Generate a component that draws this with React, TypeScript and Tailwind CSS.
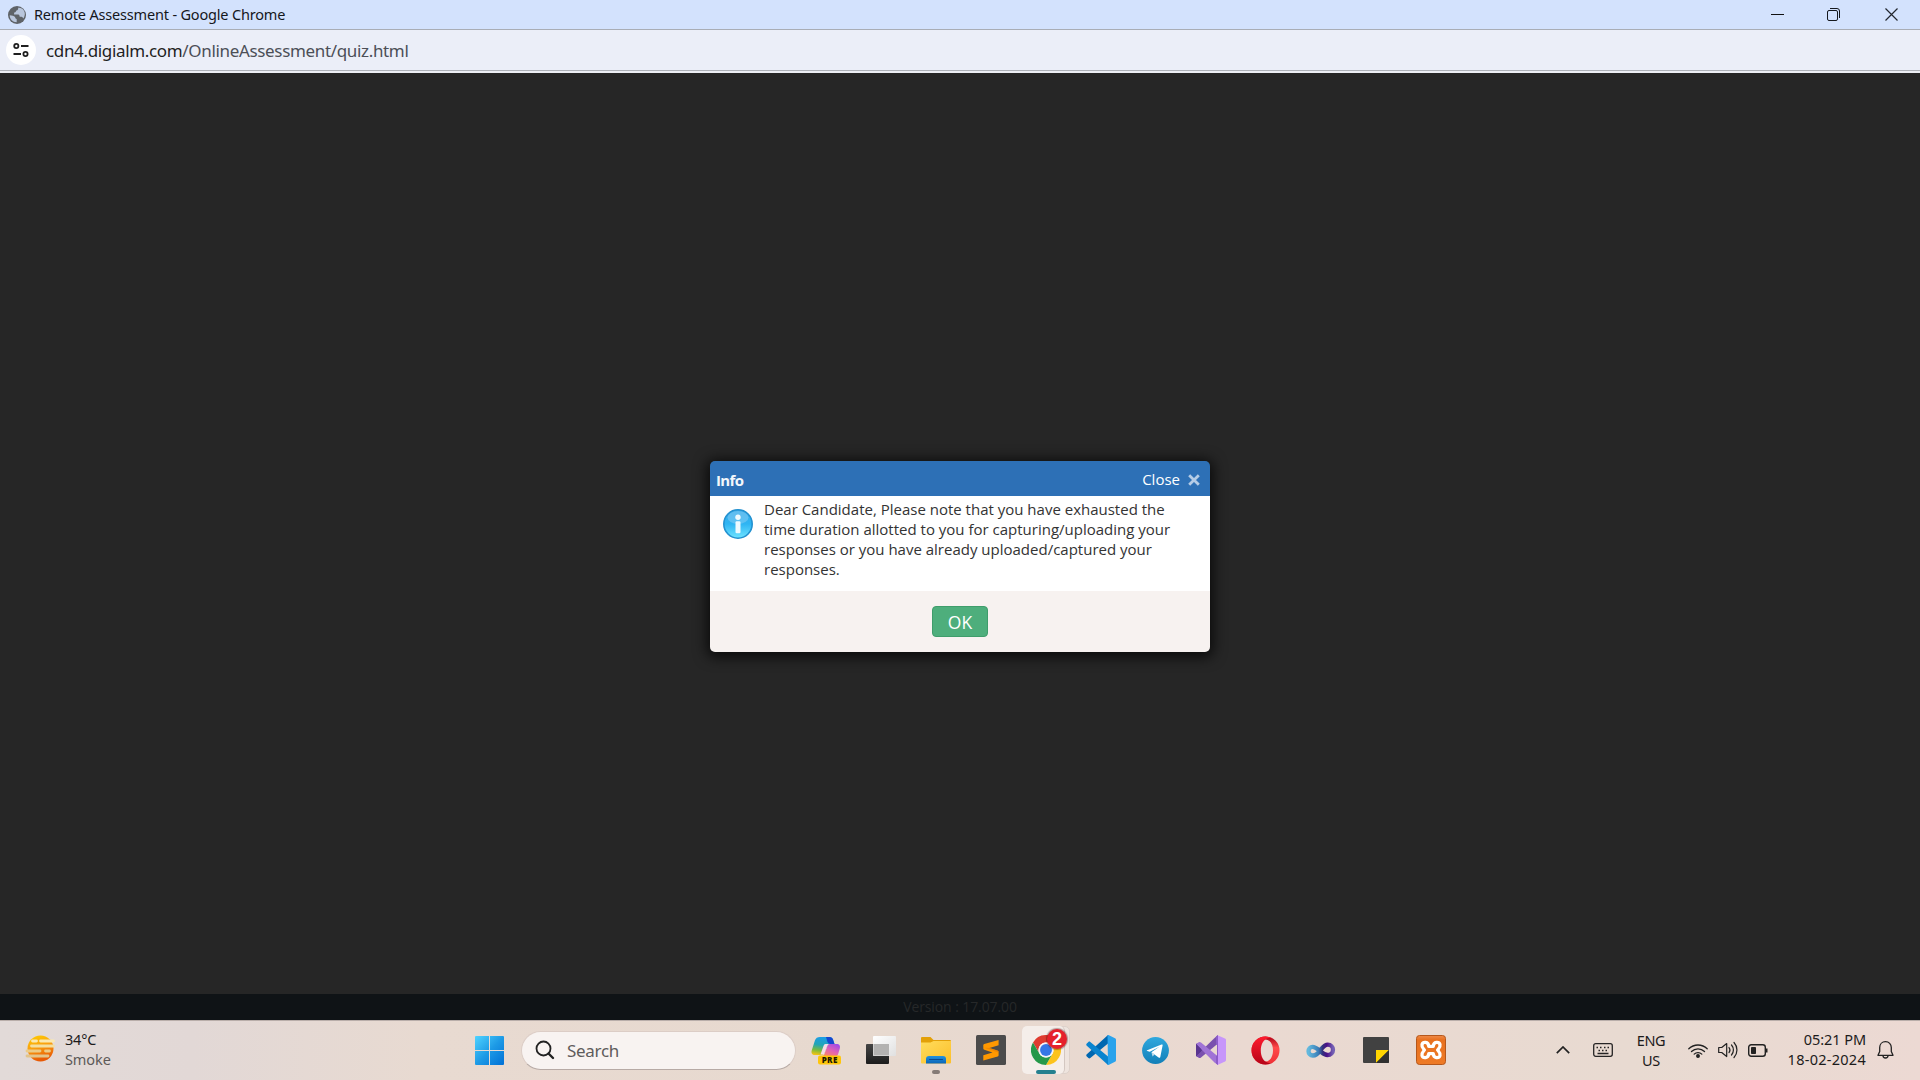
import React from "react";

function Globe() {
  return (
    <svg width="18" height="18" viewBox="0 0 18 18">
      <circle cx="9" cy="9" r="9" fill="#5f6368" />
      <path d="M9.500 1.600c.4 1.600-.3 2.500-1.700 2.600-.6 1.200-.8 2.200-2.300 2.200v2h4.200c1 .3 1.300 1.200 1.400 2.200h1.700c1.200.2 1.600 1 1.900 1.800 2.500-3.300 2-8-1.600-10-1-.7-2.400-1-3.600-.8z" fill="#b9c6dc" transform="translate(.6 .2)" />
      <path d="M1.700 9.300c2.300.2 4.200.7 5.300 1.700.5 1.100.3 1.700 1.700 1.900v3.400C4.700 16.300 1.700 13.200 1.700 9.300z" fill="#b9c6dc" />
    </svg>
  );
}

function Smoke() {
  return (
    <svg className="-mt-[3px]" width="31" height="27" viewBox="0 0 31 27">
      <defs>
        <linearGradient id="sun" x1="0" y1="0" x2=".3" y2="1">
          <stop offset="0" stopColor="#ffd000" />
          <stop offset=".5" stopColor="#f9a010" />
          <stop offset="1" stopColor="#e85a06" />
        </linearGradient>
      </defs>
      <circle cx="15.500" cy="13.500" r="13" fill="url(#sun)" />
      <g strokeLinecap="round" strokeWidth="2.800">
        <path d="M7.500 6h4M15.500 6h13" stroke="#fbe9b0" />
        <path d="M6.500 11h22" stroke="#f3dfa0" />
        <path d="M2 16h13M20.500 16h4" stroke="#eccb86" />
        <path d="M2 21h21" stroke="#e3c48a" />
      </g>
    </svg>
  );
}

function WindowsLogo() {
  return (
    <svg width="29" height="29" viewBox="0 0 29 29">
      <defs>
        <linearGradient id="win" x1="0" y1="0" x2="29" y2="29" gradientUnits="userSpaceOnUse">
          <stop offset="0" stopColor="#4fd3ff" />
          <stop offset=".5" stopColor="#1e9be6" />
          <stop offset="1" stopColor="#0070d6" />
        </linearGradient>
      </defs>
      <path d="M1 0h13v14H0V1a1 1 0 0 1 1-1zM15 0h13a1 1 0 0 1 1 1v13H15zM0 15h14v14H1a1 1 0 0 1-1-1zM15 15h14v13a1 1 0 0 1-1 1H15z" fill="url(#win)" />
    </svg>
  );
}

function Copilot() {
  return (
    <svg width="30" height="30" viewBox="0 0 30 30">
      <defs>
        <linearGradient id="cpa" x1=".5" y1="0" x2=".3" y2="1">
          <stop offset="0" stopColor="#1b9de8" />
          <stop offset=".45" stopColor="#23a5b5" />
          <stop offset=".75" stopColor="#7bbb3c" />
          <stop offset="1" stopColor="#f2c215" />
        </linearGradient>
        <linearGradient id="cpb" x1=".8" y1="0" x2=".2" y2="1">
          <stop offset="0" stopColor="#a04ae8" />
          <stop offset=".5" stopColor="#e262b4" />
          <stop offset="1" stopColor="#ff8a5c" />
        </linearGradient>
      </defs>
      <path d="M9 2h9.500c2 0 3 1 3.500 2.500L23.500 9h-4c-2 0-3 1-3.600 2.600L13.500 18c-.5 1.400-1.500 2-3 2H4c-3 0-4-2-3.300-4.500l3.200-10C4.700 3 6.500 2 9 2z" fill="url(#cpa)" />
      <path d="M15 2h3.500c2 0 3 1 3.500 2.500L23.500 9h-4c-1.500 0-2.500-.7-3-2z" fill="#1547cf" />
      <path d="M19 9h6.500c3 0 4 2 3.300 4.500L27 19.500c-.6 1.500-2 2.500-4 2.500H11l2-2 3-8c.6-2 1.500-3 3-3z" fill="url(#cpb)" />
      <path d="M14.500 9h3.500c-1.200.6-1.700 1.500-2.200 3L13 19.500h-3.500L12.500 11c.4-1.200 1-2 2-2z" fill="#f6dce8" />
      <rect x="7" y="20.500" width="23" height="9" rx="2" fill="#ffc60a" />
      <text x="18.700" y="28" textAnchor="middle" fontFamily="Open Sans, sans-serif" fontWeight="800" fontSize="8" letterSpacing=".4" fill="#1d1900">PRE</text>
    </svg>
  );
}

function TaskView() {
  return (
    <svg width="30" height="30" viewBox="0 0 30 30">
      <defs>
        <linearGradient id="tvd" x1="0" y1="0" x2="0" y2="1"><stop offset="0" stopColor="#454545" /><stop offset="1" stopColor="#1c1c1c" /></linearGradient>
        <linearGradient id="tvl" x1="0" y1="0" x2="1" y2="1"><stop offset="0" stopColor="#fff" /><stop offset="1" stopColor="#e0e0e0" /></linearGradient>
      </defs>
      <rect x="0" y="9" width="23" height="20" rx="1" fill="url(#tvd)" />
      <rect x="7" y="1" width="23" height="20" rx="1" fill="url(#tvl)" />
      <rect x="7" y="9" width="16" height="12" fill="#b3b2b1" />
      <path d="M7.500 9v11.500H23" fill="none" stroke="#d2d1d0" />
    </svg>
  );
}

function Folder() {
  return (
    <svg width="30" height="30" viewBox="0 0 30 30">
      <defs>
        <linearGradient id="fo" x1="0" y1="0" x2="1" y2="1"><stop offset="0" stopColor="#ffdc5c" /><stop offset="1" stopColor="#fcbf2a" /></linearGradient>
        <linearGradient id="fb" x1="0" y1="0" x2="0" y2="1"><stop offset="0" stopColor="#2391dd" /><stop offset="1" stopColor="#0b66b8" /></linearGradient>
      </defs>
      <path d="M1 2h8.500l3 3H29a1 1 0 0 1 1 1v4H0V3a1 1 0 0 1 1-1z" fill="#e3a008" />
      <path d="M0 7.500h9.500L12.500 6H30v21.500a1 1 0 0 1-1 1H1a1 1 0 0 1-1-1z" fill="url(#fo)" />
      <path d="M5 28.500V24c0-2 1-3 3-3h14c2 0 3 1 3 3v4.500z" fill="url(#fb)" />
      <path d="M8.500 24.500h13" stroke="#0b4a90" strokeWidth="1" strokeLinecap="round" />
    </svg>
  );
}

function Sublime() {
  return (
    <svg width="30" height="30" viewBox="0 0 30 30">
      <rect width="30" height="30" rx="1.500" fill="#4b4b4b" />
      <path d="M22.600 5v5.200L13.500 13l8 2.500c.7.200 1.100.5 1.100 1.200v3.500c0 .6-.3 1-.9 1.200L7.300 25.500v-5.300l9.200-2.800-8.200-2.600c-.7-.2-1-.6-1-1.200v-3.500c0-.6.300-1 .9-1.200z" fill="#ff9800" />
      <path d="M13.500 13l8 2.500c.7.200 1.100.5 1.100 1.200l-1 .6-13.300-4.500z" fill="#e27600" opacity=".5" />
    </svg>
  );
}

function ChromeLogo() {
  return (
    <svg width="30" height="30" viewBox="0 0 48 48">
      <circle cx="24" cy="24" r="23.500" fill="#fff" />
      <path d="M3.200 12A24 24 0 0 1 44.800 12H24A12 12 0 0 0 13.600 30z" fill="#df3b30" />
      <path d="M44.800 12A24 24 0 0 1 24 48L34.400 30A12 12 0 0 0 24 12z" fill="#fcc31e" />
      <path d="M24 48A24 24 0 0 1 3.200 12L13.600 30a12 12 0 0 0 20.800 0z" fill="#25984a" />
      <circle cx="24" cy="24" r="12" fill="#f4f3f6" />
      <circle cx="24" cy="24" r="9.500" fill="#3476e6" />
    </svg>
  );
}

function Code() {
  return (
    <svg width="30" height="30" viewBox="0 0 30 30">
      <path d="M22 0L.8 19.300c-.7.600-.7 1.600 0 2.200l1.600 1.500c.6.500 1.300.5 1.900.1L22 8.500z" fill="#0067b0" />
      <path d="M22 30L.8 10.700c-.7-.6-.7-1.600 0-2.200L2.400 7c.6-.5 1.300-.5 1.900-.1L22 21.500z" fill="#0a84cf" />
      <path d="M21.500.300c.5-.4 1-.3 1.500-.1l6 3c.6.300 1 .8 1 1.500v20.600c0 .7-.4 1.200-1 1.500l-6 3c-.6.300-1 .3-1.500-.1L22 29z" fill="#2aa3ec" />
    </svg>
  );
}

function Telegram() {
  return (
    <svg width="27" height="27" viewBox="0 0 27 27">
      <defs><linearGradient id="tg" x1="0" y1="0" x2="0" y2="1"><stop offset="0" stopColor="#2fa8de" /><stop offset="1" stopColor="#127fb8" /></linearGradient></defs>
      <circle cx="13.500" cy="13.500" r="13.400" fill="url(#tg)" />
      <path d="M5.200 13.300L19.500 7.500c.9-.3 1.300.1 1.100 1.100l-2.300 11.300c-.2 1-.9 1.200-1.700.7l-7.200-5.300 8-5.500-9.600 4.900-2.600-.7c-.7-.2-.7-.5 0-.7z" fill="#fff" />
      <path d="M9.400 15.300l1.200 4.200 1.900-1.900z" fill="#c5dcea" />
    </svg>
  );
}

function VisualStudio() {
  return (
    <svg width="30" height="30" viewBox="0 0 30 30">
      <path d="M0 9l2.200-1 4.500 4.500v5L2.200 22 0 21z" fill="#4f2d86" />
      <path d="M0 21L18 3.500 22 0v8.500L5 22.500c-.8.600-1.600.7-2.300.3z" fill="#7a50ae" />
      <path d="M0 9l2.700-1.800C3.500 6.800 4.200 7 5 7.500L22 21.500V30l-3.500-2.500z" fill="#a073d6" />
      <path d="M0 9l5 5v2.500L0 21z" fill="#5a3590" />
      <path d="M21.500.300L29 3.500c.6.300 1 .8 1 1.500v20c0 .7-.4 1.200-1 1.500L21.500 30z" fill="#c796fa" />
      <path d="M20 1.500L22 0v30l-2-1.500V21l1-.5v-11L20 9.500z" fill="#8c5cc8" />
    </svg>
  );
}

function Opera() {
  return (
    <svg width="29" height="29" viewBox="0 0 29 29">
      <defs>
        <linearGradient id="opa" x1="0" y1="0" x2="0" y2="1"><stop offset="0" stopColor="#ff1b2d" /><stop offset="1" stopColor="#b50418" /></linearGradient>
        <linearGradient id="opb" x1="0" y1="0" x2="0" y2="1"><stop offset="0" stopColor="#ab0014" /><stop offset=".4" stopColor="#ff4b4b" /><stop offset="1" stopColor="#ef2f35" /></linearGradient>
      </defs>
      <path d="M14.500 .5a14 14 0 1 1 0 28 14 14 0 1 1 0-28zM14.500 3.500c-4.600 0-7.500 5-7.500 11s2.900 11 7.500 11 7.500-5 7.500-11-2.900-11-7.500-11z" fillRule="evenodd" fill="url(#opb)" />
      <path d="M14.500 .5a14 14 0 1 0 0 28c2.500 0 5-.8 7-2-1.500.9-3 .9-4.500.2C12.500 25.500 9.800 20.500 9.800 14.500S12.500 3.500 17 2.300c1.500-.6 3-.5 4.500.2a14 14 0 0 0-7-2z" fill="url(#opa)" />
    </svg>
  );
}

function Infinity() {
  return (
    <svg width="30" height="18" viewBox="0 0 30 18">
      <defs><linearGradient id="inf" x1="0" y1="0" x2="1" y2="0"><stop offset="0" stopColor="#63b8dd" /><stop offset=".4" stopColor="#3a7fb8" /><stop offset=".58" stopColor="#33307c" /><stop offset=".75" stopColor="#4c1088" /><stop offset="1" stopColor="#7460b4" /></linearGradient></defs>
      <path d="M14 9.500C11.500 13.500 9 14.500 6.800 14.500c-2.600 0-4.300-1.900-4.300-4.300S4.200 5.800 6.600 5.800c3 0 4.900 2.200 7.400 4.200s4.500 4 7.500 4c3.300 0 5.500-2.500 5.500-5.300s-2-5-5.200-5c-3.300 0-5 2.600-7.800 5.800z" fill="none" stroke="url(#inf)" strokeWidth="4.300" />
    </svg>
  );
}

function Sticky() {
  return (
    <svg width="26" height="26" viewBox="0 0 26 26">
      <rect width="26" height="26" rx="1" fill="#414141" />
      <path d="M13 26V13h13z" fill="#ffd500" />
      <path d="M13 26L26 13v12a1 1 0 0 1-1 1z" fill="#303030" />
    </svg>
  );
}

function Xampp() {
  return (
    <svg width="30" height="30" viewBox="0 0 30 30">
      <defs><linearGradient id="xa" x1="0" y1="0" x2="0" y2="1"><stop offset="0" stopColor="#ef8a49" /><stop offset=".15" stopColor="#e8711f" /><stop offset="1" stopColor="#ee7a26" /></linearGradient></defs>
      <rect x=".5" y=".5" width="29" height="29" rx="3" fill="url(#xa)" stroke="#b5571b" />
      <path d="M12.700 11.300C12.500 6.500 7 6.500 6 9.500c-.6 2.500 1 3.800 2.400 5.500C7 16.700 5.400 18 6 20.500c1 3 6.500 3 6.700-1.800h4.600c.2 4.800 5.700 4.800 6.700 1.800.6-2.500-1-3.800-2.400-5.500C23 13.300 24.600 12 24 9.500c-1-3-6.500-3-6.700 1.800z" fill="none" stroke="#fff" strokeWidth="3.300" strokeLinejoin="round" />
    </svg>
  );
}

function InfoIcon() {
  return (
    <svg width="30" height="30" viewBox="0 0 30 30">
      <defs><linearGradient id="ii" x1="0" y1="0" x2="0" y2="1"><stop offset="0" stopColor="#35a8e8" /><stop offset=".5" stopColor="#2fb5f3" /><stop offset="1" stopColor="#6fe4ff" /></linearGradient></defs>
      <circle cx="15" cy="15" r="14.200" fill="url(#ii)" stroke="#2391d0" strokeWidth="1.600" />
      <ellipse cx="15" cy="8.500" rx="10.500" ry="6.500" fill="#8bd0f5" opacity=".5" />
      <circle cx="15" cy="8.300" r="2.700" fill="#eefaff" />
      <rect x="12.500" y="12.300" width="5" height="12" rx="1.200" fill="#eefaff" />
    </svg>
  );
}

function Cell({ children }: { children: React.ReactNode }) {
  return <div className="relative flex h-full w-[55px] shrink-0 items-center justify-center">{children}</div>;
}

export default function App() {
  return (
    <div className="flex h-[1080px] w-[1920px] flex-col overflow-hidden bg-[#262626] font-['Open_Sans',sans-serif]">
      <header className="flex h-[30px] shrink-0 items-center justify-between border-b border-[#a9adb5] bg-[#d3e2fd]">
        <div className="flex items-center pl-[8px]">
          <Globe />
          <span className="ml-[8px] whitespace-nowrap font-['Noto_Sans',sans-serif] text-[14.5px] tracking-[-0.18px] text-[#15171c]">Remote Assessment - Google Chrome</span>
        </div>
        <div className="flex items-center pr-[22px]">
          <svg width="13" height="13" viewBox="0 0 13 13"><path d="M0 6.500h13" stroke="#111" /></svg>
          <svg className="ml-[43px]" width="13" height="13" viewBox="0 0 13 13" fill="none" stroke="#16191e">
            <rect x=".5" y="2.500" width="10" height="10" rx="1.500" />
            <path d="M3 .5h7a2.500 2.500 0 0 1 2.500 2.500v7" />
          </svg>
          <svg className="ml-[45px]" width="13" height="13" viewBox="0 0 13 13"><path d="M.5.500l12 12M12.500.500l-12 12" stroke="#23272e" strokeWidth="1.200" /></svg>
        </div>
      </header>
      <div className="flex h-[41px] shrink-0 items-center border-b border-[#aeb1b8] bg-[#ebeef8] pl-[6px]">
        <div className="flex size-[30px] items-center justify-center rounded-full bg-white">
          <svg width="16" height="14" viewBox="0 0 16 14" fill="none" stroke="#1f1f1f" strokeWidth="1.800">
            <circle cx="3.300" cy="3" r="2.100" /><path d="M8 3h7.500M.5 11H8" /><circle cx="12.500" cy="11" r="2.100" />
          </svg>
        </div>
        <span className="ml-[10px] mt-[2px] whitespace-nowrap font-['Noto_Sans',sans-serif] text-[17px] tracking-[-0.34px] text-[#1f1f1f]">
          cdn4.digialm.com<span className="text-[#4c4f57]">/OnlineAssessment/quiz.html</span>
        </span>
      </div>
      <div className="h-[2px] shrink-0 bg-[#eceef4]" />

      <main className="flex h-[921px] shrink-0 justify-center pt-[388px]">
        <section className="flex h-[191px] w-[500px] flex-col overflow-hidden rounded-[5px] shadow-[0_2px_14px_3px_rgba(0,0,0,0.75)]">
          <div className="flex h-[35px] items-center justify-between bg-[#2d70b6] pl-[6px] pr-[10px] text-white">
            <span className="mt-[4px] text-[15px] font-bold tracking-[-0.6px] text-[#f3f7fb]">Info</span>
            <div className="flex items-center text-[15px]">
              <span className="mt-px font-medium">Close</span>
              <svg className="ml-[8px] mt-[3px]" width="12" height="12" viewBox="0 0 12 12"><path d="M1.200 1.200l9.600 9.600M10.800 1.200l-9.600 9.600" stroke="#b5cce6" strokeWidth="2.800" /></svg>
            </div>
          </div>
          <div className="flex h-[95px] bg-white pl-[13px] pt-[3px]">
            <div className="pt-[10px]"><InfoIcon /></div>
            <p className="ml-[11px] whitespace-nowrap text-[15px] leading-[20px] text-[#333]">
              Dear Candidate, Please note that you have exhausted the<br />
              time duration allotted to you for capturing/uploading your<br />
              responses or you have already uploaded/captured your<br />
              responses.
            </p>
          </div>
          <div className="flex h-[61px] justify-center bg-[#f7f2f0] pt-[15px]">
            <button className="flex h-[31px] w-[56px] items-center justify-center rounded-[4px] border border-[#3f9d6b] bg-[#4eae7c] pt-[2px] text-[17.5px] text-white">OK</button>
          </div>
        </section>
      </main>

      <footer className="flex h-[26px] shrink-0 items-center justify-center bg-[#0f1316] pb-[2px] text-[14px] font-medium tracking-[-0.1px] text-[#262829]">Version : 17.07.00</footer>

      <nav className="flex h-[60px] shrink-0 items-center border-t border-[#b9aeaa] bg-[linear-gradient(90deg,#e2dad8_0%,#e2d8d6_10%,#e8dad1_22%,#e7d9cf_45%,#ead9d1_65%,#e8dad1_85%,#ecd9d3_100%)] pb-[1px] font-['Noto_Sans',sans-serif] text-[14.5px] leading-[20px] text-[#1c1b1b]">
        <div className="flex w-[475px] shrink-0 items-center pl-[25px]">
          <Smoke />
          <div className="-mt-[3px] ml-[9px] flex flex-col">
            <span className="tracking-[-0.2px]">34°C</span>
            <span className="tracking-[-0.1px] text-[#5d5958]">Smoke</span>
          </div>
        </div>
        <WindowsLogo />
        <div className="ml-[17px] flex h-[39px] w-[275px] shrink-0 items-center rounded-full border border-[#dccdc6] border-b-[#b7aaa5] bg-[#f8f3f1] pl-[13px]">
          <svg width="20" height="20" viewBox="0 0 20 20" fill="none" stroke="#222"><circle cx="8.500" cy="8.500" r="7" strokeWidth="1.800" /><path d="M13.500 13.500l4.500 4.500" strokeWidth="2.400" strokeLinecap="round" /></svg>
          <span className="ml-[12px] mt-px text-[17px] tracking-[-0.3px] text-[#5f5c5b]">Search</span>
        </div>
        <div className="ml-[2px] flex h-full shrink-0">
          <Cell><Copilot /></Cell>
          <Cell><TaskView /></Cell>
          <Cell><Folder /><i className="absolute bottom-[5px] left-[24px] h-[4px] w-[8px] rounded-full bg-[#857b76]" /></Cell>
          <Cell><Sublime /></Cell>
          <Cell>
            <i className="absolute left-[4px] top-[5px] h-[48px] w-[48px] rounded-[5px] border border-[#ddd1ca] bg-[#eee4de]" />
            <i className="absolute left-[4px] top-[5px] h-[48px] w-[43px] rounded-[5px] border-r border-[#d3c7c1] bg-[#f5eeea]" />
            <div className="relative"><ChromeLogo /></div>
            <b className="absolute left-[29px] top-[8px] flex size-[20px] items-center justify-center rounded-full bg-[#e5202b] font-['Liberation_Sans',sans-serif] text-[18px] leading-none text-white shadow-[0_0_1px_1px_rgba(60,0,0,0.35)]">2</b>
            <i className="absolute bottom-[5px] left-[18px] h-[4px] w-[20px] rounded-full bg-[#25808f]" />
          </Cell>
          <Cell><Code /></Cell>
          <Cell><Telegram /></Cell>
          <Cell><VisualStudio /></Cell>
          <Cell><Opera /></Cell>
          <Cell><Infinity /></Cell>
          <Cell><Sticky /></Cell>
          <Cell><Xampp /></Cell>
        </div>
        <div className="ml-auto flex shrink-0 items-center pr-[26px]">
          <svg width="14" height="8" viewBox="0 0 14 8" fill="none" stroke="#222" strokeWidth="1.700"><path d="M.8 7.200L7 1l6.200 6.200" /></svg>
          <svg className="ml-[23px]" width="20" height="14" viewBox="0 0 20 14" fill="none" stroke="#262424" strokeWidth="1.300">
            <rect x=".7" y=".7" width="18.600" height="12.600" rx="2" />
            <path d="M3.500 4.500h1.500M7 4.500h1.500M11 4.500h1.500M14.500 4.500h1.500M5.500 7.500h1.500M9 7.500h1.500M12.500 7.500h1.500M4.500 10.500h11" />
          </svg>
          <div className="-mt-[1px] ml-[23px] flex w-[30px] flex-col items-center">
            <span className="tracking-[-0.3px]">ENG</span>
            <span className="tracking-[-0.3px]">US</span>
          </div>
          <svg className="ml-[22px]" width="20" height="15" viewBox="0 0 20 15" fill="none" stroke="#222" strokeWidth="1.300" strokeLinecap="round">
            <path d="M.8 5.800a13 13 0 0 1 18.400 0M3.500 8.500a9.200 9.200 0 0 1 13 0M6.200 11.100a5.400 5.400 0 0 1 7.600 0" />
            <circle cx="10" cy="13" r="1.300" fill="#222" />
          </svg>
          <svg className="ml-[10px]" width="20" height="18" viewBox="0 0 20 18" fill="none" stroke="#222" strokeWidth="1.200" strokeLinecap="round" strokeLinejoin="round">
            <path d="M.7 6.500v5h3l5 4V2.500l-5 4z" />
            <path d="M11 6.500a4 4 0 0 1 0 5M13.500 4a7.500 7.500 0 0 1 0 10M16 1.500a11 11 0 0 1 0 15" />
          </svg>
          <svg className="ml-[10px]" width="20" height="13" viewBox="0 0 20 13" fill="none" stroke="#222" strokeWidth="1.400">
            <rect x=".7" y=".7" width="16.600" height="11.600" rx="2.500" /><rect x="3" y="3" width="5" height="7" rx=".8" fill="#222" stroke="none" /><path d="M18.500 4.500v4" strokeWidth="2" />
          </svg>
          <div className="-mt-[3px] flex w-[98px] flex-col items-end">
            <span className="tracking-[-0.05px]">05:21 PM</span>
            <span className="tracking-[0.27px]">18-02-2024</span>
          </div>
          <svg className="ml-[11px]" width="17" height="19" viewBox="0 0 17 19" fill="none" stroke="#222" strokeWidth="1.300" strokeLinejoin="round">
            <path d="M8.500.700c-3.400 0-5.800 2.500-5.800 5.800v4L1 14.300h15l-1.700-3.800v-4c0-3.300-2.400-5.800-5.800-5.800zM6 14.500a2.500 2.500 0 0 0 5 0" />
          </svg>
        </div>
      </nav>
    </div>
  );
}
